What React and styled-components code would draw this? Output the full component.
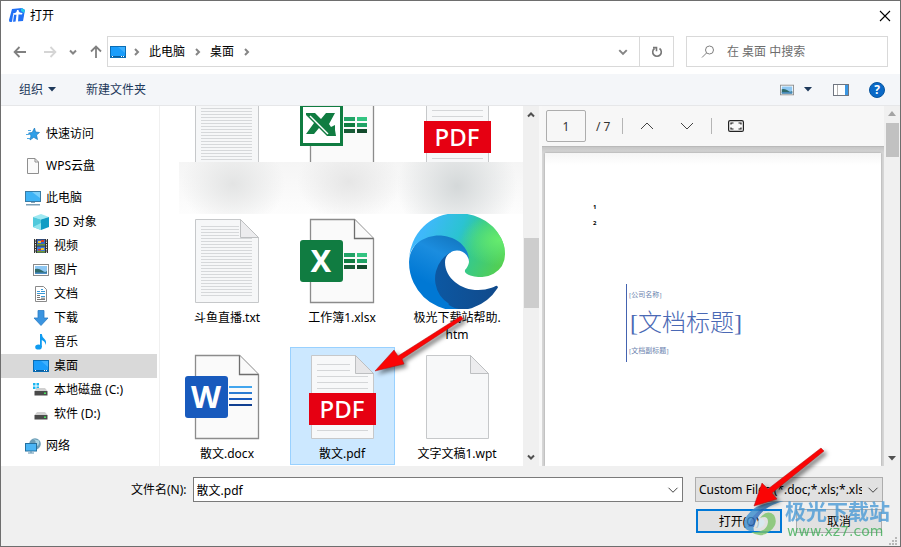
import React, { useState } from 'react'
import styled, { createGlobalStyle } from 'styled-components'

const GlobalStyle = createGlobalStyle`
* {
    box-sizing: border-box;
}
body {
    margin: 0;
    background: #f0f0f0;
}
body, button, input, select {
    font-family: "Noto Sans", "Noto Sans CJK SC", sans-serif;
    font-size: 12px;
    line-height: 17px;
    color: #000;
}
svg {
    display: block;
    flex: none;
}
`

/* ---------- small icons ---------- */

function Chevron({ dir, size = 8, color = "#858585", weight = 2 }) {
    const paths = {
        right: "M3 1 L6 4 L3 7",
        down: "M1 2.5 L4 5.5 L7 2.5",
        up: "M1 5.5 L4 2.5 L7 5.5",
    }
    return (
        <svg width={size} height={size} viewBox="0 0 8 8" fill="none" stroke={color} strokeWidth={weight * 8 / size}>
            <path d={paths[dir]} />
        </svg>
    )
}

function Triangle({ up, color = "#1e395b" }) {
    return (
        <svg width="8" height="5" viewBox="0 0 8 5">
            <path d={up ? "M4 0 L8 5 H0z" : "M0 0 H8 L4 4.5z"} fill={color} />
        </svg>
    )
}

function Arrow({ rotate = 0, color = "#808080" }) {
    return (
        <svg width="14" height="14" viewBox="0 0 14 14" fill="none" stroke={color} strokeWidth="1.8">
            <g transform={`rotate(${rotate} 7 7)`}>
                <path d="M13 7 H2 M6.5 2 L1.6 7 L6.5 12" />
            </g>
        </svg>
    )
}

function AppLogo() {
    return (
        <svg width="16" height="15" viewBox="0 0 16 15">
            <path d="M3 1 L13 0 L16 2 L14 13 L1 14 Q0 14 0 12z" fill="#2170f5" />
            <path d="M12 0 L16 2 L15 5 L12 3z" fill="#20c9e8" />
            <path d="M4 5.5 Q8 5 8 2 L9.5 2 Q9.5 5 13.5 5 L13 6.5 H9.5 L9 14 H6.5 L7.5 6.8 H4z" fill="#fff" />
            <path d="M4.5 7 L3.5 14" stroke="#fff" strokeWidth="1" />
        </svg>
    )
}

function DesktopIcon() {
    return (
        <svg width="16" height="16" viewBox="0 0 16 16">
            <rect x=".5" y="2.5" width="15" height="11" fill="#1a9dfb" stroke="#0a6db5" />
            <path d="M8 3 H15 V9z" fill="#3db0ff" />
            <path d="M1 12.5 H15" stroke="#0a5c9c" />
            <path d="M11 12.5 h1 M13 12.5 h1 M2 12.5 h1" stroke="#fff" />
        </svg>
    )
}

function StarIcon() {
    return (
        <svg width="16" height="16" viewBox="0 0 16 16">
            <path d="M9.5 2 L10.5 6 L14.500 6.5 L11.5 9 L12.5 13.5 L8.8 11.3 L5 14 L6 9.800 L3.5 7 L7.200 6.500z" fill="#2e9fe8" stroke="#1878bd" strokeWidth=".7" />
            <path d="M3 4.5 h3 M1 8.5 h3 M2 12.5 h3" stroke="#4fabe6" />
        </svg>
    )
}

function BlankIcon() {
    return (
        <svg width="16" height="16" viewBox="0 0 16 16">
            <path d="M2.5 .5 H10 L13.5 4 V15.5 H2.5z" fill="#fafafa" stroke="#8f8f8f" />
            <path d="M10 .5 V4 H13.5" fill="none" stroke="#8f8f8f" />
        </svg>
    )
}

function ComputerIcon() {
    return (
        <svg width="16" height="16" viewBox="0 0 16 16">
            <rect x=".5" y="1.5" width="15" height="10" fill="#3fb3f5" stroke="#3a7ca5" />
            <path d="M7 2 H15 V8z" fill="#7bd0fb" />
            <path d="M6 12.5 H10" stroke="#87a6ba" />
            <path d="M1 14.8 H15" stroke="#5a87a5" strokeWidth="1.2" />
        </svg>
    )
}

function CubeIcon() {
    return (
        <svg width="16" height="16" viewBox="0 0 16 16">
            <path d="M0 3 L8 0 L16 3 L8 5.5z" fill="#9fe9f2" />
            <path d="M0 3 L8 5.5 V16 L0 13z" fill="#4fc9dc" />
            <path d="M16 3 L8 5.5 V16 L16 13z" fill="#0f9cc4" />
            <path d="M0 13 L8 9 L8 16z" fill="#8fe4ee" />
        </svg>
    )
}

function VideoIcon() {
    return (
        <svg width="16" height="16" viewBox="0 0 16 16">
            <rect x="1" y="1" width="14" height="14" fill="#333" />
            <path d="M2.5 1 V15 M13.5 1 V15" stroke="#ddd" strokeDasharray="1.5 1" />
            <rect x="4" y="1.5" width="8" height="6" fill="#3566c4" />
            <rect x="4" y="8.5" width="8" height="6" fill="#3f7bd8" />
            <path d="M5 3 h3 v2 h-3z M8 10 h3 v2 h-3z" fill="#f2c22b" />
            <path d="M8 2 h3 v2 h-3z M5 11 h3 v1.5 h-3z" fill="#d63b22" />
            <path d="M4 6 h8 v1.5 h-8z M4 13 h8 v1.5 h-8z" fill="#6f9a35" />
        </svg>
    )
}

function PictureIcon({ size = 16 }) {
    return (
        <svg width={size} height={size} viewBox="0 0 16 16">
            <rect x=".5" y="2.5" width="15" height="11" fill="#fff" stroke="#8a8a8a" />
            <rect x="2" y="4" width="12" height="8" fill="#8ec7f2" />
            <path d="M2 7 Q6 6 9 8.5 T14 9 V12 H2z" fill="#2f6a6b" />
            <path d="M2 10.5 H14 V12 H2z" fill="#4d8fc9" />
        </svg>
    )
}

function DocumentIcon() {
    return (
        <svg width="16" height="16" viewBox="0 0 16 16">
            <path d="M2.5 .5 H10.5 L13.5 3.5 V15.5 H2.5z" fill="#fff" stroke="#8a8a8a" />
            <path d="M4 5.5 h3 M8 3.5 h2 M8 5.5 h4 M4 7.5 h8 M8 10.5 h4" stroke="#3998d6" />
            <path d="M4 9.5 h3 M4 11.5 h3 M4 13.5 h8 M8 12.2 h4" stroke="#777" />
        </svg>
    )
}

function DownloadIcon() {
    return (
        <svg width="16" height="16" viewBox="0 0 16 16">
            <path d="M5 .5 H11 V8 H15 L8 15.5 L1 8 H5z" fill="#3a94e0" stroke="#2b7cc4" strokeWidth=".8" />
        </svg>
    )
}

function MusicIcon() {
    return (
        <svg width="16" height="16" viewBox="0 0 16 16">
            <ellipse cx="5.5" cy="13" rx="3.3" ry="2.6" fill="#0f9bf0" />
            <path d="M7 0 H8.8 Q9 3 11.5 5 Q14 7.5 12.5 11 Q12.5 7.5 8.8 6 V13 H7z" fill="#0f9bf0" />
        </svg>
    )
}

function DriveIcon({ windows }) {
    return (
        <svg width="16" height="16" viewBox="0 0 16 16">
            {windows && <path d="M0 1 h2.5 v2.5 h-2.5z M3.5 1 h2.5 v2.5 h-2.5z M0 4.5 h2.5 v2.5 h-2.5z M3.5 4.5 h2.5 v2.5 h-2.5z" fill="#19b5f1" />}
            <path d="M4 6 H12 L14.5 9 H1.5z" fill="#d0d0d0" />
            <rect x="1.5" y="9" width="13" height="4.5" fill="#4a4a4a" />
            <rect x="11" y="10.5" width="2" height="1.5" fill="#45e35c" />
        </svg>
    )
}

function NetworkIcon() {
    return (
        <svg width="16" height="16" viewBox="0 0 16 16">
            <circle cx="10" cy="6" r="5.8" fill="#6e9fb8" />
            <path d="M8 1 Q12 3 10 6 L13 8 Q15 5 14 2.5z" fill="#a9d3e2" />
            <rect x=".5" y="5.5" width="11" height="7.5" fill="#4ab5f5" stroke="#24709f" />
            <path d="M3 15 h6 M6 13 v2" stroke="#5a90b0" />
        </svg>
    )
}

function RefreshIcon() {
    return (
        <svg width="12" height="12" viewBox="0 0 12 12" fill="none" stroke="#777" strokeWidth="1.6">
            <path d="M8.5 2.5 A4.3 4.3 0 1 1 3.5 2.5" />
            <path d="M2 1.6 H5.5 V5.2" />
        </svg>
    )
}

function SearchIcon() {
    return (
        <svg width="14" height="14" viewBox="0 0 14 14" fill="none" stroke="#808080">
            <circle cx="8.5" cy="5" r="4" />
            <path d="M5.5 8 L1 12.5" />
        </svg>
    )
}

function PaneIcon() {
    return (
        <svg width="16" height="12" viewBox="0 0 16 12">
            <rect x=".5" y=".5" width="15" height="11" fill="#fff" stroke="#6f7580" />
            <path d="M4.5 1 V11" stroke="#b5b5b5" />
            <rect x="12" y="1" width="3" height="10" fill="#3b97e3" />
        </svg>
    )
}

function FitIcon() {
    return (
        <svg width="16" height="12" viewBox="0 0 16 12" fill="none" stroke="#222" strokeWidth="1.2">
            <rect x=".6" y=".6" width="14.8" height="10.8" rx="1.5" />
            <path d="M3 4.500 V3 H5.5 M10.5 3 H13 V4.500 M13 7.500 V9 H10.5 M5.5 9 H3 V7.500" />
        </svg>
    )
}

/* ---------- large file icons, all on a 96px box ---------- */

function TextFileIcon() {
    const lines = []
    for (let y = 13; y < 85; y += 3) {
        lines.push(<path key={y} d={`M22 ${y}.5 H${y < 25 ? 60 : 73}`} stroke="#d6d8da" />)
    }
    return (
        <svg width="96" height="96" viewBox="0 0 96 96">
            <path d="M16.5 6.5 H61.5 L79.5 24.5 V89.5 H16.5z" fill="#f6f7f8" stroke="#c6c8ca" />
            {lines}
            <path d="M61.5 6.5 V24.5 H79.5z" fill="#ececee" stroke="#bdbfc1" />
        </svg>
    )
}

function BlankFileIcon() {
    return (
        <svg width="96" height="96" viewBox="0 0 96 96">
            <path d="M17.5 6.5 H61.5 L79.5 24.5 V89.5 H17.5z" fill="#f7f8f9" stroke="#c6c8ca" />
            <path d="M61.5 6.5 V24.5 H79.5z" fill="#ececee" stroke="#bdbfc1" />
        </svg>
    )
}

function OfficePage() {
    return (
        <>
            <path d="M16.5 6.5 H60.5 L79.5 25.5 V89.5 H16.5z" fill="#fafafa" stroke="#8c8c8c" strokeWidth="1.3" />
            <path d="M60.5 6.5 V25.5 H79.5" fill="#fafafa" stroke="#6e6e6e" strokeWidth="1.3" />
        </>
    )
}

function SheetCells() {
    return (
        <>
            <path d="M50 40 h11 v4 h-11z" fill="#21a366" />
            <path d="M63 40 h10 v4 h-10z" fill="#33c481" />
            <path d="M50 46 h11 v4 h-11z" fill="#107c41" />
            <path d="M63 46 h10 v4 h-10z" fill="#21a366" />
            <path d="M50 52 h11 v4 h-11z" fill="#185c37" />
            <path d="M63 52 h10 v4 h-10z" fill="#134a2c" />
        </>
    )
}

function OldExcelIcon() {
    return (
        <svg width="96" height="96" viewBox="0 0 96 96">
            <OfficePage />
            <SheetCells />
            <rect x="7.5" y="28.5" width="40" height="39" fill="#fff" stroke="#107c41" strokeWidth="3" />
            <path d="M12 36 H21 L27 42 L32 36 H41 L35 47 L37 50 L41 48 V53 L42 59 H33 L25 51 L20 57 H12 L20 46 L12 38z" fill="#107c41" />
            <path d="M16 39 L34 57" stroke="#fff" strokeWidth="1.5" />
        </svg>
    )
}

function ExcelIcon() {
    return (
        <svg width="96" height="96" viewBox="0 0 96 96">
            <OfficePage />
            <SheetCells />
            <rect x="6" y="27" width="43" height="42" rx="3" fill="#107c41" />
            <LogoText x="27" y="59" size={31}>X</LogoText>
        </svg>
    )
}

function WordIcon() {
    return (
        <svg width="96" height="96" viewBox="0 0 96 96">
            <OfficePage />
            <path d="M50 38 h23" stroke="#41a5ee" strokeWidth="2" />
            <path d="M50 44 h23" stroke="#2b7cd3" strokeWidth="2" />
            <path d="M50 50 h23" stroke="#185abd" strokeWidth="2" />
            <path d="M50 56 h23" stroke="#103f91" strokeWidth="2" />
            <rect x="6" y="27" width="43" height="42" rx="3" fill="#185abd" />
            <LogoText x="27" y="59" size={31}>W</LogoText>
        </svg>
    )
}

function PdfIcon() {
    return (
        <svg width="96" height="96" viewBox="0 0 96 96">
            <path d="M17.5 6.5 H61.5 L79.5 24.5 V89.5 H17.5z" fill="#f7f8f9" stroke="#c6c8ca" />
            <path d="M23 15.5 h33 M23 21.5 h33 M23 27.5 h51 M23 33.5 h51 M23 39.5 h51 M23 81.5 h51" stroke="#d4d6d8" />
            <path d="M61.5 6.5 V24.5 H79.5z" fill="#e6e6e8" stroke="#bdbfc1" />
            <rect x="15" y="44" width="67" height="32" fill="#e60012" />
            <LogoText x="48" y="69" size={24}>PDF</LogoText>
        </svg>
    )
}

function EdgeIcon() {
    return (
        <svg width="96" height="96" viewBox="0 0 256 256">
            <defs>
                <linearGradient id="edgeDark" x1="0" x2="1">
                    <stop offset="0" stopColor="#0c59a4" />
                    <stop offset="1" stopColor="#114a8b" />
                </linearGradient>
                <linearGradient id="edgeBlue" x1=".7" y1="0" x2=".3" y2="1">
                    <stop offset="0" stopColor="#1274bd" />
                    <stop offset=".3" stopColor="#1b8ddf" />
                    <stop offset=".7" stopColor="#0078d4" />
                </linearGradient>
                <linearGradient id="edgeGreen" x1="0" y1=".4" x2="1" y2=".7">
                    <stop offset=".1" stopColor="#3fb8fb" />
                    <stop offset=".45" stopColor="#2bc3d2" />
                    <stop offset=".65" stopColor="#35c98e" />
                    <stop offset="1" stopColor="#54cf50" />
                </linearGradient>
                <radialGradient id="edgeGlow" cx=".94" cy=".42" r=".4">
                    <stop offset="0" stopColor="#66eb6e" />
                    <stop offset="1" stopColor="#66eb6e" stopOpacity="0" />
                </radialGradient>
            </defs>
            <g transform="translate(-4.63 -4.92)">
                <path fill="url(#edgeDark)" d="M235.68 199.39a93.73 93.73 0 0 1-10.54 4.71 101.87 101.87 0 0 1-35.9 6.46c-47.32 0-88.54-32.55-88.54-74.32a31.48 31.48 0 0 1 16.43-27.37c-42.8 1.8-53.8 46.4-53.8 72.53 0 73.88 68.09 81.37 82.76 81.37 7.91 0 19.84-2.3 27-4.56l1.31-.44a128.34 128.34 0 0 0 66.6-52.8 4 4 0 0 0-5.32-5.58z" />
                <path fill="url(#edgeBlue)" d="M110.34 246.34a79.2 79.2 0 0 1-22.74-21.34 80.72 80.72 0 0 1 29.53-116.13c3.12-1.47 8.45-4.13 15.54-4a32.35 32.35 0 0 1 25.69 13 31.88 31.88 0 0 1 6.36 18.66c0-.21 24.46-79.6-80-79.6-43.9 0-80 41.66-80 78.21a130.15 130.15 0 0 0 12.11 56 128 128 0 0 0 156.38 67.11 75.55 75.55 0 0 1-62.78-8z" />
                {["url(#edgeGreen)", "url(#edgeGlow)"].map(fill => (
                    <path key={fill} fill={fill} d="M156.94 153.78c-.81 1.05-3.3 2.5-3.3 5.66 0 2.61 1.7 5.12 4.72 7.23 14.38 10 41.49 8.68 41.56 8.68a59.56 59.56 0 0 0 30.27-8.35 61.38 61.38 0 0 0 30.43-52.88c.26-22.41-8-37.31-11.34-43.91-21.19-41.45-66.93-65.29-116.67-65.29a128 128 0 0 0-128 126.2c.48-36.54 36.8-66.05 80-66.05 3.5 0 23.46.34 42 10.07 16.34 8.58 24.9 18.94 30.85 29.21 6.18 10.67 7.28 24.15 7.28 29.52s-2.74 13.33-7.8 19.91z" />
                ))}
            </g>
        </svg>
    )
}

/* ---------- data ---------- */

const places = [
    { name: "快速访问", icon: <StarIcon />, top: true },
    { name: "WPS云盘", icon: <BlankIcon />, top: true },
    { name: "此电脑", icon: <ComputerIcon />, top: true },
    { name: "3D 对象", icon: <CubeIcon /> },
    { name: "视频", icon: <VideoIcon /> },
    { name: "图片", icon: <PictureIcon /> },
    { name: "文档", icon: <DocumentIcon /> },
    { name: "下载", icon: <DownloadIcon /> },
    { name: "音乐", icon: <MusicIcon /> },
    { name: "桌面", icon: <DesktopIcon /> },
    { name: "本地磁盘 (C:)", icon: <DriveIcon windows /> },
    { name: "软件 (D:)", icon: <DriveIcon /> },
    { name: "网络", icon: <NetworkIcon />, top: true },
]

const files = [
    { name: "", icon: <TextFileIcon /> },
    { name: "", icon: <OldExcelIcon /> },
    { name: "", icon: <PdfIcon /> },
    { name: "斗鱼直播.txt", icon: <TextFileIcon /> },
    { name: "工作簿1.xlsx", icon: <ExcelIcon /> },
    { name: "极光下载站帮助.htm", icon: <EdgeIcon /> },
    { name: "散文.docx", icon: <WordIcon /> },
    { name: "散文.pdf", icon: <PdfIcon /> },
    { name: "文字文稿1.wpt", icon: <BlankFileIcon /> },
]

/* ---------- parts of the dialog ---------- */

function AddressRow() {
    return (
        <Address>
            <NavButtons>
                <IconButton aria-label="后退"><Arrow /></IconButton>
                <IconButton aria-label="前进"><Arrow rotate={180} color="#d5d5d5" /></IconButton>
                <IconButton aria-label="最近"><Chevron dir="down" /></IconButton>
                <IconButton aria-label="上移"><Arrow rotate={90} /></IconButton>
            </NavButtons>
            <PathBox>
                <DesktopIcon />
                <Chevron dir="right" />
                <Crumb>此电脑</Crumb>
                <Chevron dir="right" />
                <Crumb>桌面</Crumb>
                <Chevron dir="right" />
                <Spacer />
                <IconButton aria-label="历史"><Chevron dir="down" size={10} /></IconButton>
                <RefreshButton aria-label="刷新"><RefreshIcon /></RefreshButton>
            </PathBox>
            <SearchBox>
                <SearchIcon />
                <SearchInput aria-label="搜索" placeholder="在 桌面 中搜索" />
            </SearchBox>
        </Address>
    )
}

function Toolbar() {
    return (
        <Bar>
            <ToolButton>组织 <Triangle /></ToolButton>
            <ToolButton>新建文件夹</ToolButton>
            <Spacer />
            <BarIcons>
                <IconButton aria-label="视图"><PictureIcon size={14} /></IconButton>
                <IconButton aria-label="更多视图"><Triangle /></IconButton>
                <IconButton aria-label="预览窗格"><PaneIcon /></IconButton>
                <HelpButton aria-label="帮助">?</HelpButton>
            </BarIcons>
        </Bar>
    )
}

function Places() {
    const [current, setCurrent] = useState("桌面")

    return (
        <PlaceList>
            {places.map(place => (
                <PlaceButton
                    key={place.name}
                    $top={place.top}
                    $active={place.name === current}
                    onClick={() => setCurrent(place.name)}
                >
                    {place.icon}
                    {place.name}
                </PlaceButton>
            ))}
        </PlaceList>
    )
}

function Files({ selected, onSelect }) {
    return (
        <FilePane>
            <FileScroll>
                <FileGrid>
                    {files.map((file, index) => (
                        <FileTile key={index} $active={file.name === selected} onClick={() => onSelect(file.name)}>
                            {file.icon}
                            <FileName>{file.name}</FileName>
                        </FileTile>
                    ))}
                    <BlurStrip />
                    <FilePointer>
                        <RedArrow width={96} height={64} d="M86 3 L88 6 L27 46 L29 51 L0 58 L19 37 L23 43z" />
                    </FilePointer>
                </FileGrid>
            </FileScroll>
            <ScrollTrack>
                <Chevron dir="up" color="#505050" />
                <FileThumb />
                <Chevron dir="down" color="#505050" />
            </ScrollTrack>
        </FilePane>
    )
}

function RedArrow({ width, height, d }) {
    return (
        <ShadowSvg width={width} height={height} viewBox={`0 0 ${width} ${height}`}>
            <path d={d} fill="#fa0505" stroke="#b01010" strokeWidth=".5" />
        </ShadowSvg>
    )
}

function Preview() {
    const [page, setPage] = useState("1")

    return (
        <PreviewPane>
            <PreviewMain>
                <PdfBar>
                    <PageInput aria-label="页码" value={page} onChange={e => setPage(e.target.value)} />
                    <PageTotal>/ 7</PageTotal>
                    <Divider />
                    <PdfButton aria-label="上一页"><Chevron dir="up" size={16} color="#444" weight={1} /></PdfButton>
                    <PdfButton aria-label="下一页"><Chevron dir="down" size={16} color="#444" weight={1} /></PdfButton>
                    <Divider />
                    <PdfButton aria-label="适合页面"><FitIcon /></PdfButton>
                </PdfBar>
                <PdfCanvas>
                    <PdfPage>
                        <LineNumber>1</LineNumber>
                        <LineNumber>2</LineNumber>
                        <CoverBlock>
                            <CoverSmall>[公司名称]</CoverSmall>
                            <CoverTitle>[文档标题]</CoverTitle>
                            <CoverSmall>[文档副标题]</CoverSmall>
                        </CoverBlock>
                    </PdfPage>
                </PdfCanvas>
            </PreviewMain>
            <ScrollTrack>
                <Triangle up color="#a3a3a3" />
                <PdfThumb />
                <Triangle color="#505050" />
            </ScrollTrack>
        </PreviewPane>
    )
}

function Watermark() {
    return (
        <Mark>
            <svg width="42" height="40" viewBox="0 0 42 40">
                <path d="M1 26 Q2 3 41 1 Q22 6 15 17 Q9 24 11 31 Q3 32 1 26z" fill="#3b8fd0" />
                <path d="M5 27 Q10 10 28 5 Q14 13 11 27z" fill="#2d6fc0" />
                <path d="M8 32 Q24 33 25 22 Q25 15 17 18 Q24 9 31 15 Q36 24 27 31 Q18 39 8 32z" fill="#7cc46a" />
                <path d="M13 28 Q12 20 19 19 Q24 21 20 26 Q17 29 13 28z" fill="#d8ebf3" />
            </svg>
            <MarkText>
                <MarkName>极光下载站</MarkName>
                <MarkUrl>www.xz7.com</MarkUrl>
            </MarkText>
        </Mark>
    )
}

function Footer({ fileName, onChange }) {
    return (
        <FooterBox>
            <FooterRow>
                <label htmlFor="fileName">文件名(N):</label>
                <NameBox>
                    <NameInput id="fileName" value={fileName} onChange={e => onChange(e.target.value)} />
                    <IconButton aria-label="历史文件"><Chevron dir="down" size={12} color="#444" weight={1} /></IconButton>
                </NameBox>
                <TypeBox>
                    <TypeSelect aria-label="文件类型">
                        <option>Custom Files (*.doc;*.xls;*.xlsx;*.pdf)</option>
                    </TypeSelect>
                    <Chevron dir="down" size={12} color="#444" weight={1} />
                </TypeBox>
            </FooterRow>
            <ButtonRow>
                <DialogButton $primary>打开(O)</DialogButton>
                <DialogButton>取消</DialogButton>
            </ButtonRow>
            <Watermark />
            <OpenPointer>
                <RedArrow width={80} height={64} d="M67 0 L70 3 L18 45 L23 51 L0 58 L8 35 L14 41z" />
            </OpenPointer>
            <Grip>
                <svg width="9" height="9" viewBox="0 0 9 9" fill="#b8b8b8">
                    <path d="M6 0h2v2h-2z M3 3h2v2h-2z M6 3h2v2h-2z M0 6h2v2h-2z M3 6h2v2h-2z M6 6h2v2h-2z" />
                </svg>
            </Grip>
        </FooterBox>
    )
}

function App() {
    const [fileName, setFileName] = useState("散文.pdf")

    return (
        <>
            <GlobalStyle />
            <Dialog>
                <TitleBar>
                    <AppLogo />
                    打开
                    <Spacer />
                    <IconButton aria-label="关闭">
                        <svg width="12" height="12" viewBox="0 0 12 12" stroke="#000" strokeWidth="1.1">
                            <path d="M1 1 L11 11 M11 1 L1 11" />
                        </svg>
                    </IconButton>
                </TitleBar>
                <AddressRow />
                <Toolbar />
                <Content>
                    <Places />
                    <Files selected={fileName} onSelect={setFileName} />
                    <Preview />
                </Content>
                <Footer fileName={fileName} onChange={setFileName} />
            </Dialog>
        </>
    )
}

export default App

/* ---------- styles ---------- */

const Dialog = styled.div`
    display: flex;
    flex-direction: column;
    height: 100vh;
    background: #fff;
    border: 1px solid #6e6e6e;
    overflow: hidden;
`

const Spacer = styled.div`
    flex: 1;
`

const IconButton = styled.button`
    display: flex;
    align-items: center;
    justify-content: center;
    padding: 0;
    border: 0;
    background: none;
`

const TitleBar = styled.div`
    display: flex;
    align-items: center;
    gap: 5px;
    height: 29px;
    padding: 0 9px 0 8px;
`

const Address = styled.div`
    display: flex;
    gap: 12px;
    padding: 6px 12px 7px;
`

const NavButtons = styled.div`
    display: flex;
    align-items: center;
    gap: 12px;
    width: 82px;

    & > :nth-child(1) {
        margin-right: 4px;
    }
`

const PathBox = styled.div`
    display: flex;
    align-items: center;
    flex: 1;
    gap: 6px;
    height: 31px;
    padding-left: 2px;
    border: 1px solid #d9d9d9;

    & > svg:nth-child(2) {
        margin-right: 2px;
    }
`

const Crumb = styled.span`
    margin-right: 2px;
    margin-left: 1px;

    & + svg {
        margin-right: 2px;
    }
`

const RefreshButton = styled(IconButton)`
    align-self: stretch;
    width: 34px;
    margin-left: 5px;
    border-left: 1px solid #d9d9d9;
`

const SearchBox = styled.div`
    display: flex;
    align-items: center;
    gap: 12px;
    width: 202px;
    height: 31px;
    padding-left: 14px;
    border: 1px solid #d9d9d9;
`

const SearchInput = styled.input`
    flex: 1;
    min-width: 0;
    padding: 0;
    border: 0;
    outline: 0;

    &::placeholder {
        color: #6d6d6d;
    }
`

const Bar = styled.div`
    display: flex;
    align-items: center;
    gap: 30px;
    height: 32px;
    padding: 0 15px 0 18px;
    background: #f4f6f9;
    border-bottom: 1px solid #e6e7e9;
`

const ToolButton = styled.button`
    display: flex;
    align-items: center;
    gap: 5px;
    padding: 0;
    border: 0;
    background: none;
    color: #1e395b;
`

const BarIcons = styled.div`
    display: flex;
    align-items: center;
    gap: 20px;

    & > :nth-child(2) {
        margin-left: -10px;
        margin-right: 1px;
    }
`

const HelpButton = styled.button`
    width: 16px;
    height: 16px;
    padding: 0;
    border: 1px solid #08559e;
    border-radius: 50%;
    background: #0a69c7;
    color: #fff;
    font-weight: bold;
    line-height: 14px;
`

const Content = styled.div`
    display: flex;
    flex: 1;
    min-height: 0;
`

const PlaceList = styled.nav`
    display: flex;
    flex: none;
    flex-direction: column;
    width: 159px;
    padding: 8px 2px 0 0;
    border-right: 1px solid #f0f0f0;
    overflow: hidden;
`

const PlaceButton = styled.button`
    display: flex;
    align-items: center;
    flex: none;
    gap: 5px;
    height: 24px;
    margin-top: ${props => props.$top ? "8px" : "0"};
    padding: 0 0 1px ${props => props.$top ? "24px" : "32px"};
    border: 0;
    background: ${props => props.$active ? "#d9d9d9" : "none"};
    white-space: nowrap;

    /* the last group starts right under the drives */
    & + & {
        flex: none;
    }
`

const FilePane = styled.div`
    display: flex;
    flex: 1 1 379px;
    min-width: 0;
`

const FileScroll = styled.div`
    display: flex;
    flex: 1;
    flex-direction: column;
    justify-content: flex-end;
    min-width: 0;
    padding: 0 0 1px 15px;
    overflow: hidden;
`

const FileGrid = styled.div`
    position: relative;
    display: grid;
    flex: none;
    grid-template-columns: repeat(auto-fill, 105px);
    grid-template-rows: 136px 136px 118px;
    column-gap: 10px;
`

const FileTile = styled.button`
    display: flex;
    flex-direction: column;
    align-items: center;
    padding: 1px 1px 0 0;
    border: 1px solid ${props => props.$active ? "#99d1ff" : "transparent"};
    background: ${props => props.$active ? "#cce8ff" : "none"};
`

const FileName = styled.span`
    max-width: 92px;
    text-align: center;
    word-break: break-all;
`

const BlurStrip = styled.div`
    position: absolute;
    top: 87px;
    right: 0;
    left: 4px;
    height: 52px;
    background:
        radial-gradient(ellipse 52px 44px at 54px 22px, #e3e4e4, transparent),
        radial-gradient(ellipse 52px 40px at 170px 20px, #e6e6e6, transparent),
        radial-gradient(ellipse 60px 60px at 278px 24px, #d4d8d9, transparent),
        linear-gradient(#f5f5f5, #fdfdfd);
`

const FilePointer = styled.div`
    position: absolute;
    top: 238px;
    left: 200px;
    pointer-events: none;
`

const ShadowSvg = styled.svg`
    overflow: visible;
    filter: drop-shadow(3px 3px 2px rgba(0, 0, 0, 0.5));
`

const LogoText = styled.text.attrs({ textAnchor: "middle" })`
    fill: #fff;
    font-family: "Noto Sans", sans-serif;
    font-size: ${props => props.size}px;
    font-weight: ${props => props.size > 24 ? 700 : 500};
`

const ScrollTrack = styled.div`
    display: flex;
    flex: none;
    flex-direction: column;
    align-items: center;
    justify-content: space-between;
    width: 16px;
    padding: 5px 0;
    background: #f0f0f0;
`

const FileThumb = styled.div`
    width: 15px;
    height: 70px;
    margin-top: 119px;
    margin-bottom: auto;
    background: #cdcdcd;
`

const PreviewPane = styled.div`
    display: flex;
    flex: 1 1 361px;
    min-width: 0;
    padding-left: 3px;
    background: #f8f8f8;
`

const PdfThumb = styled.div`
    width: 13px;
    height: 34px;
    margin-top: 7px;
    margin-bottom: auto;
    background: #c1c1c1;
`

const PreviewMain = styled.div`
    display: flex;
    flex: 1;
    flex-direction: column;
    min-width: 0;
`

const PdfBar = styled.div`
    display: flex;
    align-items: center;
    height: 41px;
    padding-left: 4px;
    background: #f7f7f7;
    border-bottom: 1px solid #b9b9b9;
`

const PageInput = styled.input`
    width: 40px;
    height: 32px;
    padding: 0;
    border: 1px solid #adadad;
    border-radius: 2px;
    background: #f7f7f7;
    color: #333;
    text-align: center;
`

const PageTotal = styled.span`
    width: 36px;
    padding-left: 10px;
    color: #333;
`

const Divider = styled.div`
    width: 1px;
    height: 16px;
    background: #b5b5b5;

    &:nth-child(3) {
        margin-right: 4px;
    }
    &:nth-child(6) {
        margin-left: 4px;
        margin-right: 4px;
    }
`

const PdfButton = styled(IconButton)`
    width: 40px;
    height: 32px;
`

const PdfCanvas = styled.div`
    flex: 1;
    min-height: 0;
    padding: 6px 3px 0;
    background: linear-gradient(#c6c6c6, #d6d6d6 6px);
    overflow: hidden;
`

const PdfPage = styled.div`
    height: 100%;
    padding: 46px 48px 0;
    background: linear-gradient(#f5f5f5, #fff 12px);
    box-shadow: 0 0 2px #999;
    overflow: hidden;
`

const LineNumber = styled.div`
    height: 16px;
    font-size: 6px;
    font-weight: bold;
    line-height: 16px;
`

const CoverBlock = styled.div`
    display: flex;
    flex-direction: column;
    justify-content: space-between;
    height: 78px;
    margin: 53px 0 0 33px;
    padding: 4px 2px;
    border-left: 1px solid #4463b0;
    white-space: nowrap;
`

const CoverSmall = styled.div`
    color: #6b7fae;
    font-family: "Liberation Serif", "Noto Sans CJK SC", serif;
    font-size: 7px;
    line-height: 14px;
`

const CoverTitle = styled.div`
    padding-left: 1px;
    color: #4a69b5;
    font-family: "Liberation Serif", "Noto Sans CJK SC", serif;
    font-size: 24px;
    font-weight: 300;
    line-height: 36px;
`

const FooterBox = styled.div`
    position: relative;
    display: flex;
    flex: none;
    flex-direction: column;
    gap: 7px;
    padding: 11px 17px 13px;
    background: #f0f0f0;
`

const FooterRow = styled.div`
    display: flex;
    align-items: center;
    padding-left: 113px;

    & > label {
        margin-right: 6px;
    }
`

const NameBox = styled.div`
    display: flex;
    flex: 1;
    height: 25px;
    padding: 0 3px;
    border: 1px solid #7a7a7a;
    background: #fff;
`

const NameInput = styled.input`
    flex: 1;
    min-width: 0;
    padding: 1px 0 0;
    border: 0;
    outline: 0;
`

const TypeBox = styled.div`
    display: flex;
    align-items: center;
    width: 188px;
    height: 25px;
    margin-left: 12px;
    padding: 0 3px;
    border: 1px solid #adadad;
    background: #e1e1e1;
`

const TypeSelect = styled.select`
    flex: 1;
    min-width: 0;
    margin-right: 5px;
    padding: 0;
    border: 0;
    appearance: none;
    background: none;
    text-overflow: clip;
`

const ButtonRow = styled.div`
    display: flex;
    justify-content: flex-end;
    gap: 14px;
    padding-right: 1px;
`

const DialogButton = styled.button`
    width: 86px;
    height: 24px;
    padding: 0;
    border: ${props => props.$primary ? "2px solid #0078d7" : "1px solid #adadad"};
    background: #e1e1e1;
`

const OpenPointer = styled.div`
    position: absolute;
    right: 66px;
    bottom: 34px;
    pointer-events: none;
`

const Mark = styled.div`
    position: absolute;
    right: 10px;
    bottom: 6px;
    display: flex;
    align-items: center;
    opacity: 0.8;
    pointer-events: none;
`

const MarkText = styled.div`
    display: flex;
    flex-direction: column;
    white-space: nowrap;
`

const MarkName = styled.span`
    color: #4a9bd6;
    font-size: 21px;
    font-weight: bold;
    line-height: 22px;
`

const MarkUrl = styled.span`
    padding-left: 2px;
    color: #3fae58;
    font-family: "DejaVu Sans", sans-serif;
    font-size: 14px;
    line-height: 18px;
`

const Grip = styled.div`
    position: absolute;
    right: 2px;
    bottom: 0;
`
